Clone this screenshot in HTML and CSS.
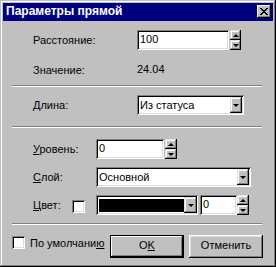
FILE: index.html
```html
<!DOCTYPE html>
<html>
<head>
<meta charset="utf-8">
<link rel="stylesheet" href="styles.css">
</head>
<body>
<div class="window">
  <div class="titlebar">
    <span class="title">Параметры прямой</span>
    <div class="close"><svg width="8" height="7" viewBox="0 0 8 7" shape-rendering="crispEdges"><path d="M0 0h2v1H0z M6 0h2v1H6z M1 1h2v1H1z M5 1h2v1H5z M2 2h4v1H2z M3 3h2v1H3z M2 4h4v1H2z M1 5h2v1H1z M5 5h2v1H5z M0 6h2v1H0z M6 6h2v1H6z" fill="#000"/></svg></div>
  </div>
  <div class="content">
    <div class="row r1">
      <span class="label lw1">Расстояние:</span>
      <div class="field f1"><span class="ftext">100</span></div>
      <div class="spin s1"><div class="sb"><span class="up"></span></div><div class="sb"><span class="down"></span></div></div>
    </div>
    <div class="row r2">
      <span class="label lw1">Значение:</span>
      <span class="value">24.04</span>
    </div>
    <div class="sep sep1"></div>
    <div class="row r4">
      <span class="label lw1">Длина:</span>
      <div class="field combo c1"><span class="ctext">Из статуса</span><div class="dd"><span class="down"></span></div></div>
    </div>
    <div class="sep sep2"></div>
    <div class="row r6">
      <span class="label lw2"><u>У</u>ровень:</span>
      <div class="field f2"><span class="ftext">0</span></div>
      <div class="spin s2"><div class="sb"><span class="up"></span></div><div class="sb"><span class="down"></span></div></div>
    </div>
    <div class="row r7">
      <span class="label lw2"><u>С</u>лой:</span>
      <div class="field combo c2"><span class="ctext">Основной</span><div class="dd"><span class="down"></span></div></div>
    </div>
    <div class="row r8">
      <span class="label lw3"><u>Ц</u>вет:</span>
      <div class="check ch1"></div>
      <div class="field combo c3"><div class="swatch"></div><div class="dd dd3"><span class="down"></span></div></div>
      <div class="field f3"><span class="ftext">0</span></div>
      <div class="spin s3"><div class="sb"><span class="up"></span></div><div class="sb"><span class="down"></span></div></div>
    </div>
    <div class="sep sep3"></div>
    <div class="row r10">
      <div class="check ch2"></div>
      <span class="label deflabel">По умолчани<u>ю</u></span>
      <div class="btn default">O<u>K</u></div>
      <div class="btn cancel">Отменить</div>
    </div>
  </div>
</div>
</body>
</html>
```
FILE: styles.css
```css
* { box-sizing: border-box; }
html, body { margin: 0; padding: 0; }
body {
  width: 276px;
  height: 267px;
  overflow: hidden;
  background: #c0c0c0;
  font-family: "Liberation Sans", Arial, sans-serif;
  font-size: 11px;
  color: #000;
}
u { text-decoration: underline; text-underline-offset: 1px; }

.window {
  width: 276px;
  height: 267px;
  padding: 3px;
  background: #c0c0c0;
  box-shadow: inset -1px -1px #000, inset 1px 1px #c0c0c0, inset -2px -2px #808080, inset 2px 2px #fff;
  display: flex;
  flex-direction: column;
}

.titlebar {
  height: 18px;
  background: #000080;
  color: #fff;
  display: flex;
  justify-content: space-between;
  align-items: flex-start;
}
.title {
  font-weight: bold;
  font-size: 12px;
  line-height: 16px;
  padding-left: 3px;
}
.close {
  width: 14px;
  height: 13px;
  margin: 2px 2px 0 0;
  background: #c0c0c0;
  box-shadow: inset -1px -1px #000, inset 1px 1px #fff, inset -2px -2px #808080;
  display: flex;
  align-items: center;
  justify-content: center;
  padding-right: 1px;
}
.close svg { display: block; }

.content { padding: 0 11px 0 9px; }

.row {
  display: flex;
  align-items: center;
  height: 20px;
  padding-left: 21px;
}
.label { white-space: nowrap; flex: none; }
.lw1 { width: 104px; }
.lw2 { width: 63px; }
.lw3 { width: 39px; }

.field {
  height: 20px;
  background: #fff;
  box-shadow: inset 1px 1px #808080, inset -1px -1px #fff, inset 2px 2px #000, inset -2px -2px #dfdfdf;
  padding: 2px 2px 2px 3px;
  flex: none;
}
.ftext { display: block; line-height: 15px; white-space: nowrap; }

.spin {
  display: flex;
  flex-direction: column;
  height: 20px;
  flex: none;
}
.sb {
  flex: 1;
  background: #c0c0c0;
  box-shadow: inset -1px -1px #000, inset 1px 1px #dfdfdf, inset -2px -2px #808080, inset 2px 2px #fff;
  display: flex;
  align-items: center;
  justify-content: center;
}
.up, .down {
  width: 0;
  height: 0;
  border-left: 3px solid transparent;
  border-right: 3px solid transparent;
  display: block;
}
.up { border-bottom: 3px solid #000; }
.down { border-top: 3px solid #000; }

.combo {
  display: flex;
  align-items: stretch;
  padding: 2px 2px 2px 3px;
}
.ctext { flex: 1; line-height: 16px; white-space: nowrap; }
.dd {
  width: 12px;
  flex: none;
  background: #c0c0c0;
  box-shadow: inset -1px -1px #000, inset 1px 1px #dfdfdf, inset -2px -2px #808080, inset 2px 2px #fff;
  display: flex;
  align-items: center;
  justify-content: center;
}
.dd3 { width: 13px; }

.r1 { margin-top: 9px; }
.f1 { width: 92px; }
.s1 { width: 11px; margin-left: 1px; }
.r2 { margin-top: 13px; height: 13px; }
.value { line-height: 13px; }
.sep {
  height: 2px;
  width: 250px;
  border-top: 1px solid #808080;
  border-bottom: 1px solid #fff;
}
.sep1 { margin-top: 9px; }
.r4 { margin-top: 8px; }
.c1 { width: 107px; }
.sep2 { margin-top: 11px; }
.r6 { margin-top: 11px; }
.f2 { width: 68px; }
.s2 { width: 12px; margin-left: 1px; }
.r7 { margin-top: 8px; }
.c2 { width: 155px; }
.r8 { margin-top: 8px; }

.check {
  width: 13px;
  height: 13px;
  flex: none;
  background: #fff;
  box-shadow: inset 1px 1px #808080, inset -1px -1px #fff, inset 2px 2px #000, inset -2px -2px #dfdfdf;
}
.ch1 { align-self: flex-start; margin-top: 5px; }
.c3 { width: 102px; margin-left: 11px; padding: 4px 1px 3px 3px; }
.c3 .dd3 { margin: -2px 0 -1px 0; }
.swatch { flex: 1; background: #000; }
.f3 { width: 37px; margin-left: 2px; }
.s3 { width: 12px; }

.sep3 { margin-top: 8px; }
.r10 {
  margin-top: 10px;
  height: 23px;
  padding-left: 0;
  align-items: flex-start;
}
.ch2 { margin-top: 1px; }
.deflabel { width: 80px; margin-left: 5px; margin-top: 2px; line-height: 13px; }
.btn {
  width: 74px;
  height: 23px;
  flex: none;
  background: #c0c0c0;
  text-align: center;
  line-height: 14px;
  padding-top: 3px;
  box-shadow: inset -1px -1px #000, inset 1px 1px #fff, inset -2px -2px #808080, inset 2px 2px #dfdfdf;
}
.default {
  margin-right: 5px;
  box-shadow: inset 0 0 0 1px #000, inset -2px -2px #000, inset 2px 2px #fff, inset -3px -3px #808080;
}
```
